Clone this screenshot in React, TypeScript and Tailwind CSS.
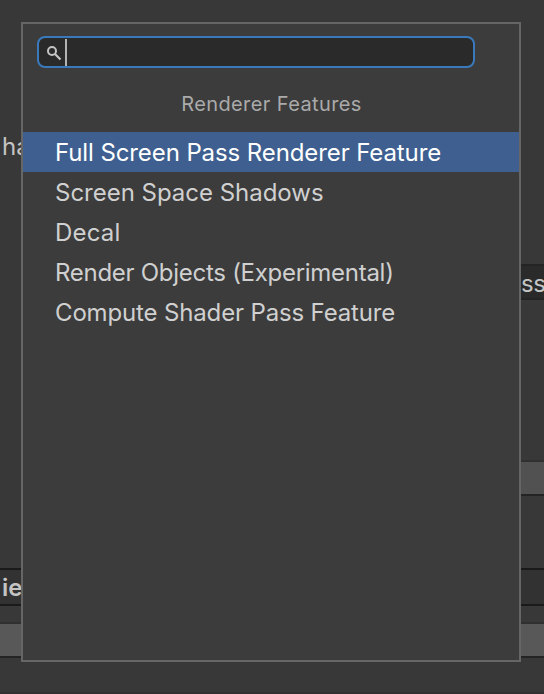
const features = [
  { name: 'Full Screen Pass Renderer Feature', tracking: 'tracking-[-0.1px]' },
  { name: 'Screen Space Shadows', tracking: 'tracking-[-0.02px]' },
  { name: 'Decal', tracking: 'tracking-[0.2px]' },
  { name: 'Render Objects (Experimental)', tracking: 'tracking-[-0.28px]' },
  { name: 'Compute Shader Pass Feature', tracking: 'tracking-[-0.15px]' },
];

function SearchField() {
  return (
    <div className="ml-[14px] mt-3 flex h-8 w-[438px] items-center rounded-[8px] border-2 border-[#3a79bb] bg-[#2a2a2a]">
      <svg className="ml-2 mt-[3px] h-[15px] w-[15px] shrink-0" viewBox="0 0 15 15" fill="none" stroke="#c4c4c4">
        <circle cx="5" cy="5" r="4" strokeWidth="2" />
        <path d="M8 8l5.5 5.5" strokeWidth="2.2" />
      </svg>
      <span className="ml-[3px] mt-px h-[27px] w-[2px] bg-[#b4b4b4]" />
    </div>
  );
}

function Inspector() {
  return (
    <div className="flex h-full flex-col text-2xl leading-[34px] text-[#c4c4c4]">
      <div className="mt-[130px] h-[34px] pl-[2px]">ha</div>
      <div className="ml-[520px] mt-[100px] h-9 border-y-2 border-[#242424] bg-[#2a2a2a] pl-px leading-[36px] tracking-[-0.3px]">ss</div>
      <div className="ml-[520px] mt-[160px] h-9 border-y-2 border-t-[#303030] border-b-[#242424] bg-[#515151]" />
      <div className="mt-[72px] h-[38px] border-y-2 border-[#1a1a1a] bg-[#323232] pl-[2px] font-semibold leading-[36px]">ie</div>
      <div className="mt-4 h-9 border-y-2 border-t-[#303030] border-b-[#242424] bg-[#585858]" />
      <div className="mt-auto h-[2px] bg-[#323031]" />
    </div>
  );
}

export default function App() {
  return (
    <div className="relative h-[694px] w-[544px] overflow-hidden bg-[#383838] font-['Inter',sans-serif]">
      <Inspector />
      <div className="absolute left-[21px] top-[22px] h-[640px] w-[500px] border-2 border-[#666666] bg-[#3c3c3c]">
        <SearchField />
        <h1 className="mt-5 h-8 pl-px text-center text-xl leading-8 tracking-[0.4px] text-[#aaaaaa]">Renderer Features</h1>
        <ul className="mt-3 text-2xl leading-[42px] text-[#d0d0d0]">
          {features.map(({ name, tracking }, i) => (
            <li key={name} className={`h-10 pl-8 ${tracking} ${i === 0 ? 'bg-[#3e5f8f] text-white' : ''}`}>
              {name}
            </li>
          ))}
        </ul>
      </div>
    </div>
  );
}
